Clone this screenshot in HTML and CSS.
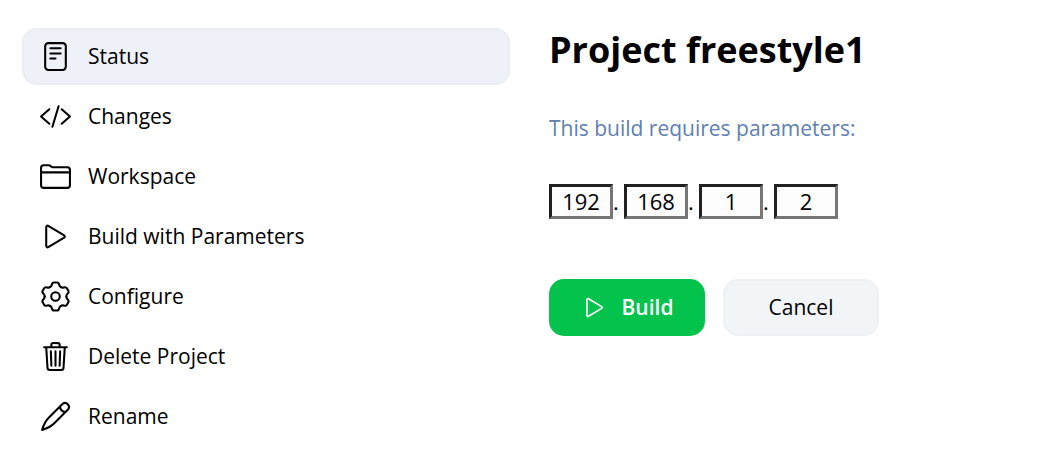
FILE: index.html
```html
<!DOCTYPE html>
<html lang="en">
<head>
<meta charset="utf-8">
<meta name="viewport" content="width=device-width, initial-scale=1">
<title>Project freestyle1</title>
<link rel="stylesheet" href="styles.css">
</head>
<body>
<div class="page">
  <nav class="tasks" aria-label="Project">
    <a class="task task-active" href="#status" aria-current="page">
      <svg class="icon" viewBox="0 0 512 512" aria-hidden="true"><rect x="96" y="48" width="320" height="416" rx="48"/><path d="M176 128h160M176 208h160M176 288h80"/></svg>
      <span>Status</span>
    </a>
    <a class="task" href="#changes">
      <svg class="icon" viewBox="0 0 512 512" aria-hidden="true"><path d="M160 368L32 256l128-112M352 368l128-112-128-112M304 96l-96 320"/></svg>
      <span>Changes</span>
    </a>
    <a class="task" href="#workspace">
      <svg class="icon" viewBox="0 0 512 512" aria-hidden="true"><path d="M440 432H72a40 40 0 01-40-40V120a40 40 0 0140-40h75.89a40 40 0 0122.19 6.72l27.84 18.56a40 40 0 0022.19 6.72H440a40 40 0 0140 40v240a40 40 0 01-40 40zM32 192h448"/></svg>
      <span>Workspace</span>
    </a>
    <a class="task" href="#build">
      <svg class="icon" viewBox="0 0 512 512" aria-hidden="true"><path d="M112 111v290c0 17.44 17 28.52 31 20.16l247.9-148.37c12.12-7.25 12.12-26.33 0-33.58L143 90.84c-14-8.36-31 2.72-31 20.16z"/></svg>
      <span>Build with Parameters</span>
    </a>
    <a class="task" href="#configure">
      <svg class="icon" viewBox="-256 -256 512 512" aria-hidden="true">
        <circle r="66"/>
        <path id="lobe" d="M-84-146C-66-156-60-165-57-182Q-50-217-22-217H22Q50-217 57-182C60-165 66-156 84-146"/>
        <use href="#lobe" transform="rotate(60)"/>
        <use href="#lobe" transform="rotate(120)"/>
        <use href="#lobe" transform="rotate(180)"/>
        <use href="#lobe" transform="rotate(240)"/>
        <use href="#lobe" transform="rotate(300)"/>
      </svg>
      <span>Configure</span>
    </a>
    <a class="task" href="#delete">
      <svg class="icon" viewBox="0 0 512 512" aria-hidden="true"><path d="M112 112l20 320c.95 18.49 14.4 32 32 32h184c17.67 0 30.87-13.51 32-32l20-320M80 112h352M192 112V72a23.93 23.93 0 0124-24h80a23.93 23.93 0 0124 24v40M256 176v224M184 176l8 224M328 176l-8 224"/></svg>
      <span>Delete Project</span>
    </a>
    <a class="task" href="#rename">
      <svg class="icon" viewBox="0 0 512 512" aria-hidden="true"><path d="M364 62L151 275C112 312 77 369 48 464C143 435 200 400 237 361L450 148A61 61 0 00364 62zM327 99C328 151 361 184 413 185"/></svg>
      <span>Rename</span>
    </a>
  </nav>
  <main class="content">
    <h1 class="title">Project freestyle1</h1>
    <p class="hint">This build requires parameters:</p>
    <form>
      <div class="address" role="group" aria-label="IP address">
        <input class="octet" type="text" value="192" aria-label="First octet"><span class="dot">.</span>
        <input class="octet" type="text" value="168" aria-label="Second octet"><span class="dot">.</span>
        <input class="octet" type="text" value="1" aria-label="Third octet"><span class="dot">.</span>
        <input class="octet" type="text" value="2" aria-label="Fourth octet">
      </div>
      <div class="actions">
        <button class="button button-primary" type="submit">
          <svg class="icon icon-small" viewBox="0 0 512 512" aria-hidden="true"><path d="M112 111v290c0 17.44 17 28.52 31 20.16l247.9-148.37c12.12-7.25 12.12-26.33 0-33.58L143 90.84c-14-8.36-31 2.72-31 20.16z"/></svg>
          <span>Build</span>
        </button>
        <button class="button" type="button"><span>Cancel</span></button>
      </div>
    </form>
  </main>
</div>
</body>
</html>
```
FILE: styles.css
```css
* {
  box-sizing: border-box;
}

body {
  margin: 0;
  background: #fff;
  color: #000;
  font: 21px/30px "Open Sans", "Noto Sans", sans-serif;
}

.page {
  display: flex;
  gap: 39px;
  padding: 28px 22px 12px;
}

.tasks {
  flex: 0 1 488px;
  display: flex;
  flex-direction: column;
  gap: 3px;
}

.task {
  display: flex;
  align-items: center;
  gap: 16px;
  min-height: 57px;
  padding: 0 17px;
  border-radius: 15px;
  color: inherit;
  text-decoration: none;
}

.task span,
.button span {
  padding-bottom: 2px;
}

.task-active {
  background: #eef1f7;
  box-shadow: inset 0 0 0 2px #eaeef3;
}

.icon {
  flex: none;
  width: 33px;
  height: 33px;
  fill: none;
  stroke: currentColor;
  stroke-width: 32px;
  stroke-linecap: round;
  stroke-linejoin: round;
}

.icon-small {
  width: 27px;
  height: 27px;
}

.content {
  flex: 1;
  min-width: 0;
}

.title {
  margin: 0 0 41px;
  font-size: 36px;
  line-height: 44px;
}

.hint {
  margin: 0 0 41px;
  color: #6080b0;
}

.address {
  display: flex;
  margin-bottom: 60px;
  font-size: 22px;
}

.octet {
  width: 64px;
  height: 35px;
  padding: 0 0 2px;
  border: 3px solid;
  border-color: #212121 #767676 #767676 #212121;
  border-radius: 0;
  background: #fdfdfd;
  color: inherit;
  font: inherit;
  text-align: center;
}

.dot {
  width: 11px;
  line-height: 34px;
}

.actions {
  display: flex;
  gap: 18px;
}

.button {
  display: flex;
  align-items: center;
  justify-content: center;
  gap: 14px;
  min-width: 156px;
  height: 57px;
  padding: 0 20px;
  border: 2px solid #edf1f5;
  border-radius: 15px;
  background: #f2f5f8;
  color: #000;
  font: inherit;
}

.button-primary {
  border-color: #04c34d;
  background: #04c34d;
  color: #fff;
  font-weight: 600;
}
```
